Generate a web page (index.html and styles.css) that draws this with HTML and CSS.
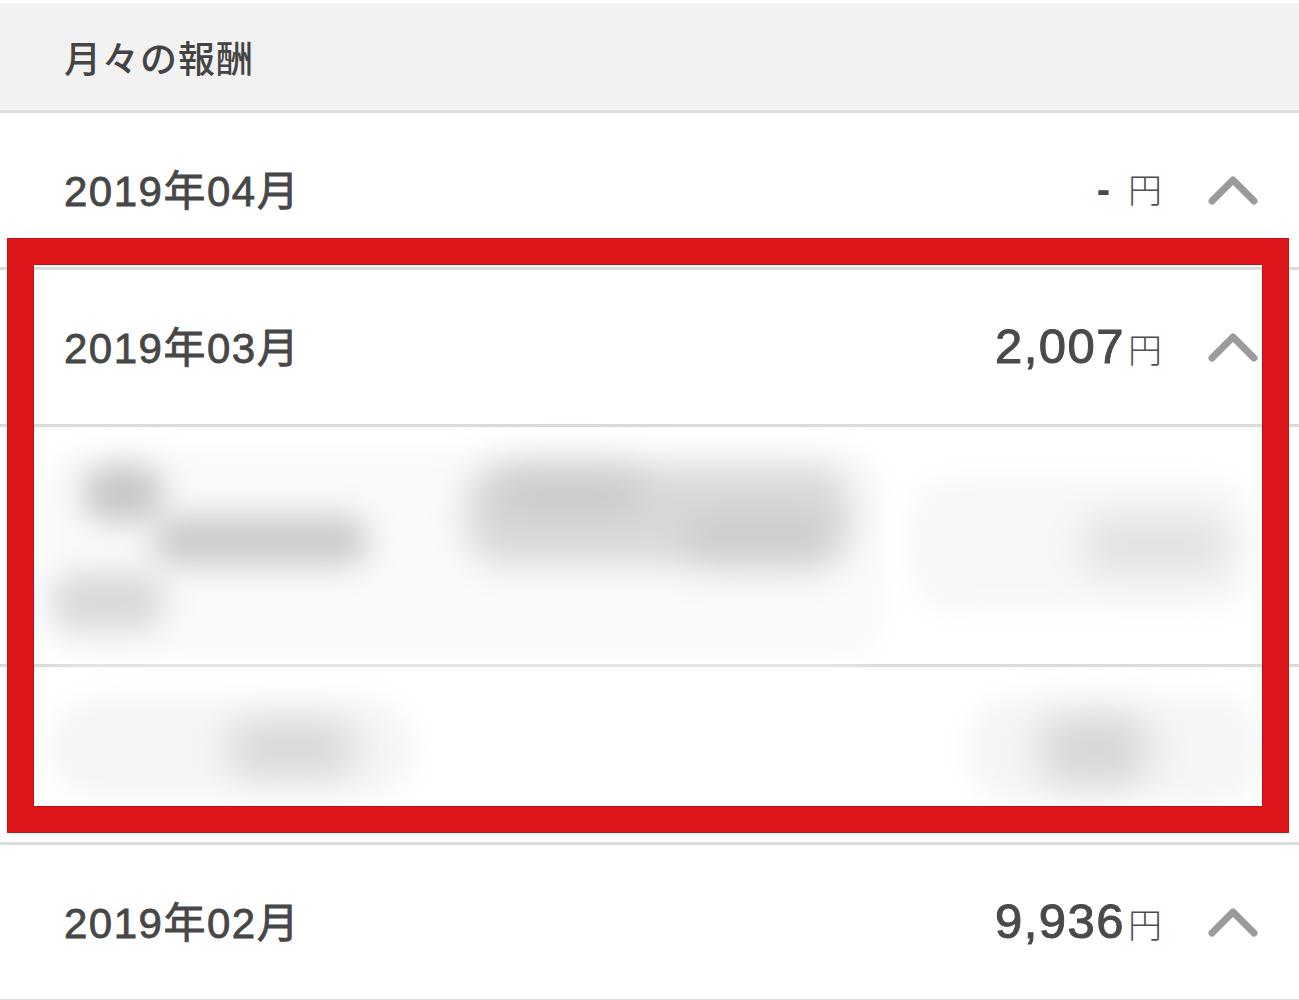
FILE: index.html
```html
<!DOCTYPE html>
<html lang="ja">
<head>
<meta charset="utf-8">
<title>月々の報酬</title>
<link rel="stylesheet" href="styles.css">
</head>
<body>
<div class="page">
  <header class="section-head">月々の報酬</header>

  <div class="row">
    <div class="date">2019年04月</div>
    <div class="amount"><span class="dash">-</span><span class="yen yen-sp">円</span></div>
    <svg class="chev" width="50" height="29" viewBox="0 0 50 29"><polyline points="4,25 25,4 46,25" fill="none" stroke="#9b9b9b" stroke-width="7" stroke-linecap="round" stroke-linejoin="round"/></svg>
  </div>

  <div class="row">
    <div class="date">2019年03月</div>
    <div class="amount"><span class="num">2,007</span><span class="yen">円</span></div>
    <svg class="chev" width="50" height="29" viewBox="0 0 50 29"><polyline points="4,25 25,4 46,25" fill="none" stroke="#9b9b9b" stroke-width="7" stroke-linecap="round" stroke-linejoin="round"/></svg>
  </div>

  <div class="detail detail-1">
    <div class="d1-left">
      <div class="d1-line1">
        <div class="g1">
          <div class="g1a"></div>
          <div class="g1b"></div>
        </div>
        <div class="g2">
          <div class="g2a"></div>
          <div class="g2b"></div>
        </div>
      </div>
      <div class="d1-line2"></div>
    </div>
    <div class="d1-right">
      <div class="d1-spot"></div>
    </div>
  </div>

  <div class="detail detail-2">
    <div class="d2-left"><div class="d2-spot"></div></div>
    <div class="d2-right"><div class="d2-spot d2-spot-r"></div></div>
  </div>

  <div class="row">
    <div class="date">2019年02月</div>
    <div class="amount"><span class="num">9,936</span><span class="yen">円</span></div>
    <svg class="chev" width="50" height="29" viewBox="0 0 50 29"><polyline points="4,25 25,4 46,25" fill="none" stroke="#9b9b9b" stroke-width="7" stroke-linecap="round" stroke-linejoin="round"/></svg>
  </div>

  <div class="highlight"></div>
</div>
</body>
</html>
```

FILE: styles.css
```css
html, body {
  margin: 0;
  padding: 0;
  background: #ffffff;
}

body {
  font-family: "Liberation Sans", "Noto Sans CJK JP", sans-serif;
  color: #474747;
  overflow: hidden;
}

.page {
  position: relative;
  padding-top: 3px;
  width: 1299px;
}

.section-head {
  height: 107px;
  background: #f2f2f2;
  border-bottom: 3px solid #dcdcdc;
  display: flex;
  align-items: center;
  padding-left: 64px;
  font-family: "Noto Sans CJK JP", sans-serif;
  font-size: 37px;
  font-weight: 500;
  letter-spacing: 1px;
  color: #444;
}

.row {
  height: 154px;
  border-bottom: 3px solid #dcdcdc;
  display: flex;
  align-items: center;
  padding: 0 41px 0 64px;
}

.date {
  flex: 1;
  font-size: 42px;
  letter-spacing: 1.5px;
  color: #474747;
  -webkit-text-stroke: 0.8px #474747;
  margin-top: -5px;
}

.amount {
  display: flex;
  align-items: baseline;
  margin-top: -3px;
}

.num {
  font-size: 49px;
  letter-spacing: 1.5px;
  color: #4a4a4a;
  -webkit-text-stroke: 1px #4a4a4a;
}

.dash {
  font-size: 40px;
  font-weight: 700;
  color: #4a4a4a;
}

.yen {
  font-family: "Noto Sans CJK JP", sans-serif;
  font-size: 34px;
  font-weight: 300;
  color: #4d4d4d;
  margin-left: 3px;
}

.yen-sp {
  margin-left: 18px;
}

.chev {
  margin-left: 46px;
  display: block;
  filter: blur(0.6px);
}

/* blurred details */
.detail {
  border-bottom: 3px solid #dcdcdc;
  display: flex;
  align-items: flex-start;
}

.detail-1 {
  height: 237px;
}

.d1-left {
  margin: 22px 0 0 41px;
  width: 845px;
  height: 210px;
  background: #fafafa;
  border-radius: 40px;
  filter: blur(10px);
  display: flex;
  flex-direction: column;
  padding-top: 16px;
  box-sizing: border-box;
}

.d1-line1 {
  display: flex;
  height: 100px;
}

.g1 {
  margin-left: 42px;
  width: 282px;
  display: flex;
  flex-direction: column;
}

.g1a {
  width: 80px;
  height: 60px;
  background: #c6c6c6;
  border-radius: 25px;
  filter: blur(12px);
}

.g1b {
  margin: -6px 0 0 70px;
  width: 215px;
  height: 52px;
  background: #c9c9c9;
  border-radius: 22px;
  filter: blur(13px);
}

.g2 {
  margin-left: 99px;
  width: 389px;
  height: 100px;
  background: #d9d9d9;
  border-radius: 40px;
  filter: blur(14px);
  display: flex;
  flex-direction: column;
  justify-content: space-between;
}

.g2a {
  margin-left: 30px;
  width: 150px;
  height: 50px;
  background: #cacaca;
  border-radius: 25px;
  filter: blur(10px);
}

.g2b {
  margin-left: 220px;
  width: 150px;
  height: 50px;
  background: #cbcbcb;
  border-radius: 25px;
  filter: blur(10px);
}

.d1-line2 {
  margin: 8px 0 0 9px;
  width: 116px;
  height: 57px;
  background: #d8d8d8;
  border-radius: 28px;
  filter: blur(12px);
}

.d1-right {
  margin: 52px 0 0 25px;
  width: 340px;
  height: 132px;
  background: #f7f7f7;
  border-radius: 40px;
  filter: blur(14px);
  display: flex;
  align-items: center;
  justify-content: flex-end;
  padding-right: 20px;
  box-sizing: border-box;
}

.d1-spot {
  width: 150px;
  height: 60px;
  background: #e2e2e2;
  border-radius: 30px;
  filter: blur(12px);
}

.detail-2 {
  height: 175px;
  justify-content: space-between;
}

.d2-left {
  margin: 33px 0 0 50px;
  width: 364px;
  height: 97px;
  background: #f5f5f5;
  border-radius: 45px;
  filter: blur(14px);
  display: flex;
  align-items: center;
  justify-content: center;
  padding-left: 120px;
  box-sizing: border-box;
}

.d2-spot {
  width: 130px;
  height: 55px;
  background: #d6d6d6;
  border-radius: 28px;
  filter: blur(14px);
}

.d2-right {
  margin: 30px 40px 0 0;
  width: 290px;
  height: 106px;
  background: #f5f5f5;
  border-radius: 45px;
  filter: blur(14px);
  display: flex;
  align-items: center;
  padding-left: 70px;
  box-sizing: border-box;
}

.d2-spot-r {
  width: 110px;
  height: 70px;
}

/* red annotation frame drawn over the list */
.highlight {
  position: absolute;
  left: 8px;
  top: 239px;
  width: 1280px;
  height: 593px;
  box-sizing: border-box;
  border: 25px solid #df1619;
  box-shadow: inset 0 0 0 1px #b81214, 0 0 0 1px #c81417;
  pointer-events: none;
}
```
